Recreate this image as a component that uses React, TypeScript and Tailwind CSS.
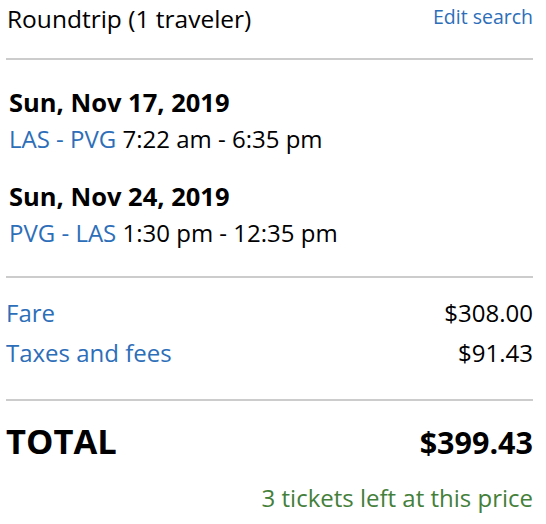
export default function App() {
  const blue = "text-[#2d6eb9]";
  return (
    <div className="w-[546px] h-[524px] bg-white font-['Open_Sans',sans-serif] text-black">
      <div className="ml-[6px] w-[527px] pt-[2px]">
        <div className="flex justify-between items-start pl-[1px]">
          <div className="text-[24.5px] leading-[34px]">Roundtrip (1 traveler)</div>
          <a className={`mt-[2px] text-[19.5px] leading-[26px] ${blue}`}>Edit search</a>
        </div>
        <div className="mt-[22px] h-[2px] bg-[#cccccc]" />

        <div className="pl-[3px] pt-[25px]">
          <div className="text-[25.5px] font-bold leading-[34px]">Sun, Nov 17, 2019</div>
          <div className="text-[24px] leading-[33px] mt-[3px]">
            <span className={blue}>LAS - PVG</span> 7:22 am - 6:35 pm
          </div>
          <div className="text-[25.5px] font-bold leading-[34px] mt-[24px]">Sun, Nov 24, 2019</div>
          <div className="text-[24px] leading-[33px] mt-[3px]">
            <span className={blue}>PVG - LAS</span> 1:30 pm - 12:35 pm
          </div>
        </div>
        <div className="mt-[27px] h-[2px] bg-[#cccccc]" />

        <div className="pt-[18px]">
          <div className="flex justify-between text-[24px] leading-[33px]">
            <span className={blue}>Fare</span>
            <span>$308.00</span>
          </div>
          <div className="flex justify-between text-[24px] leading-[33px] mt-[7px]">
            <span className={blue}>Taxes and fees</span>
            <span>$91.43</span>
          </div>
        </div>
        <div className="mt-[30px] h-[2px] bg-[#cccccc]" />

        <div className="flex justify-between items-baseline pt-[17px]">
          <span className="text-[34.5px] font-bold leading-[46px]">TOTAL</span>
          <span className="text-[30.5px] font-bold leading-[46px]">$399.43</span>
        </div>
        <div className="text-right text-[24px] leading-[33px] mt-[16px] text-[#44803a]">
          3 tickets left at this price
        </div>
      </div>
    </div>
  );
}
